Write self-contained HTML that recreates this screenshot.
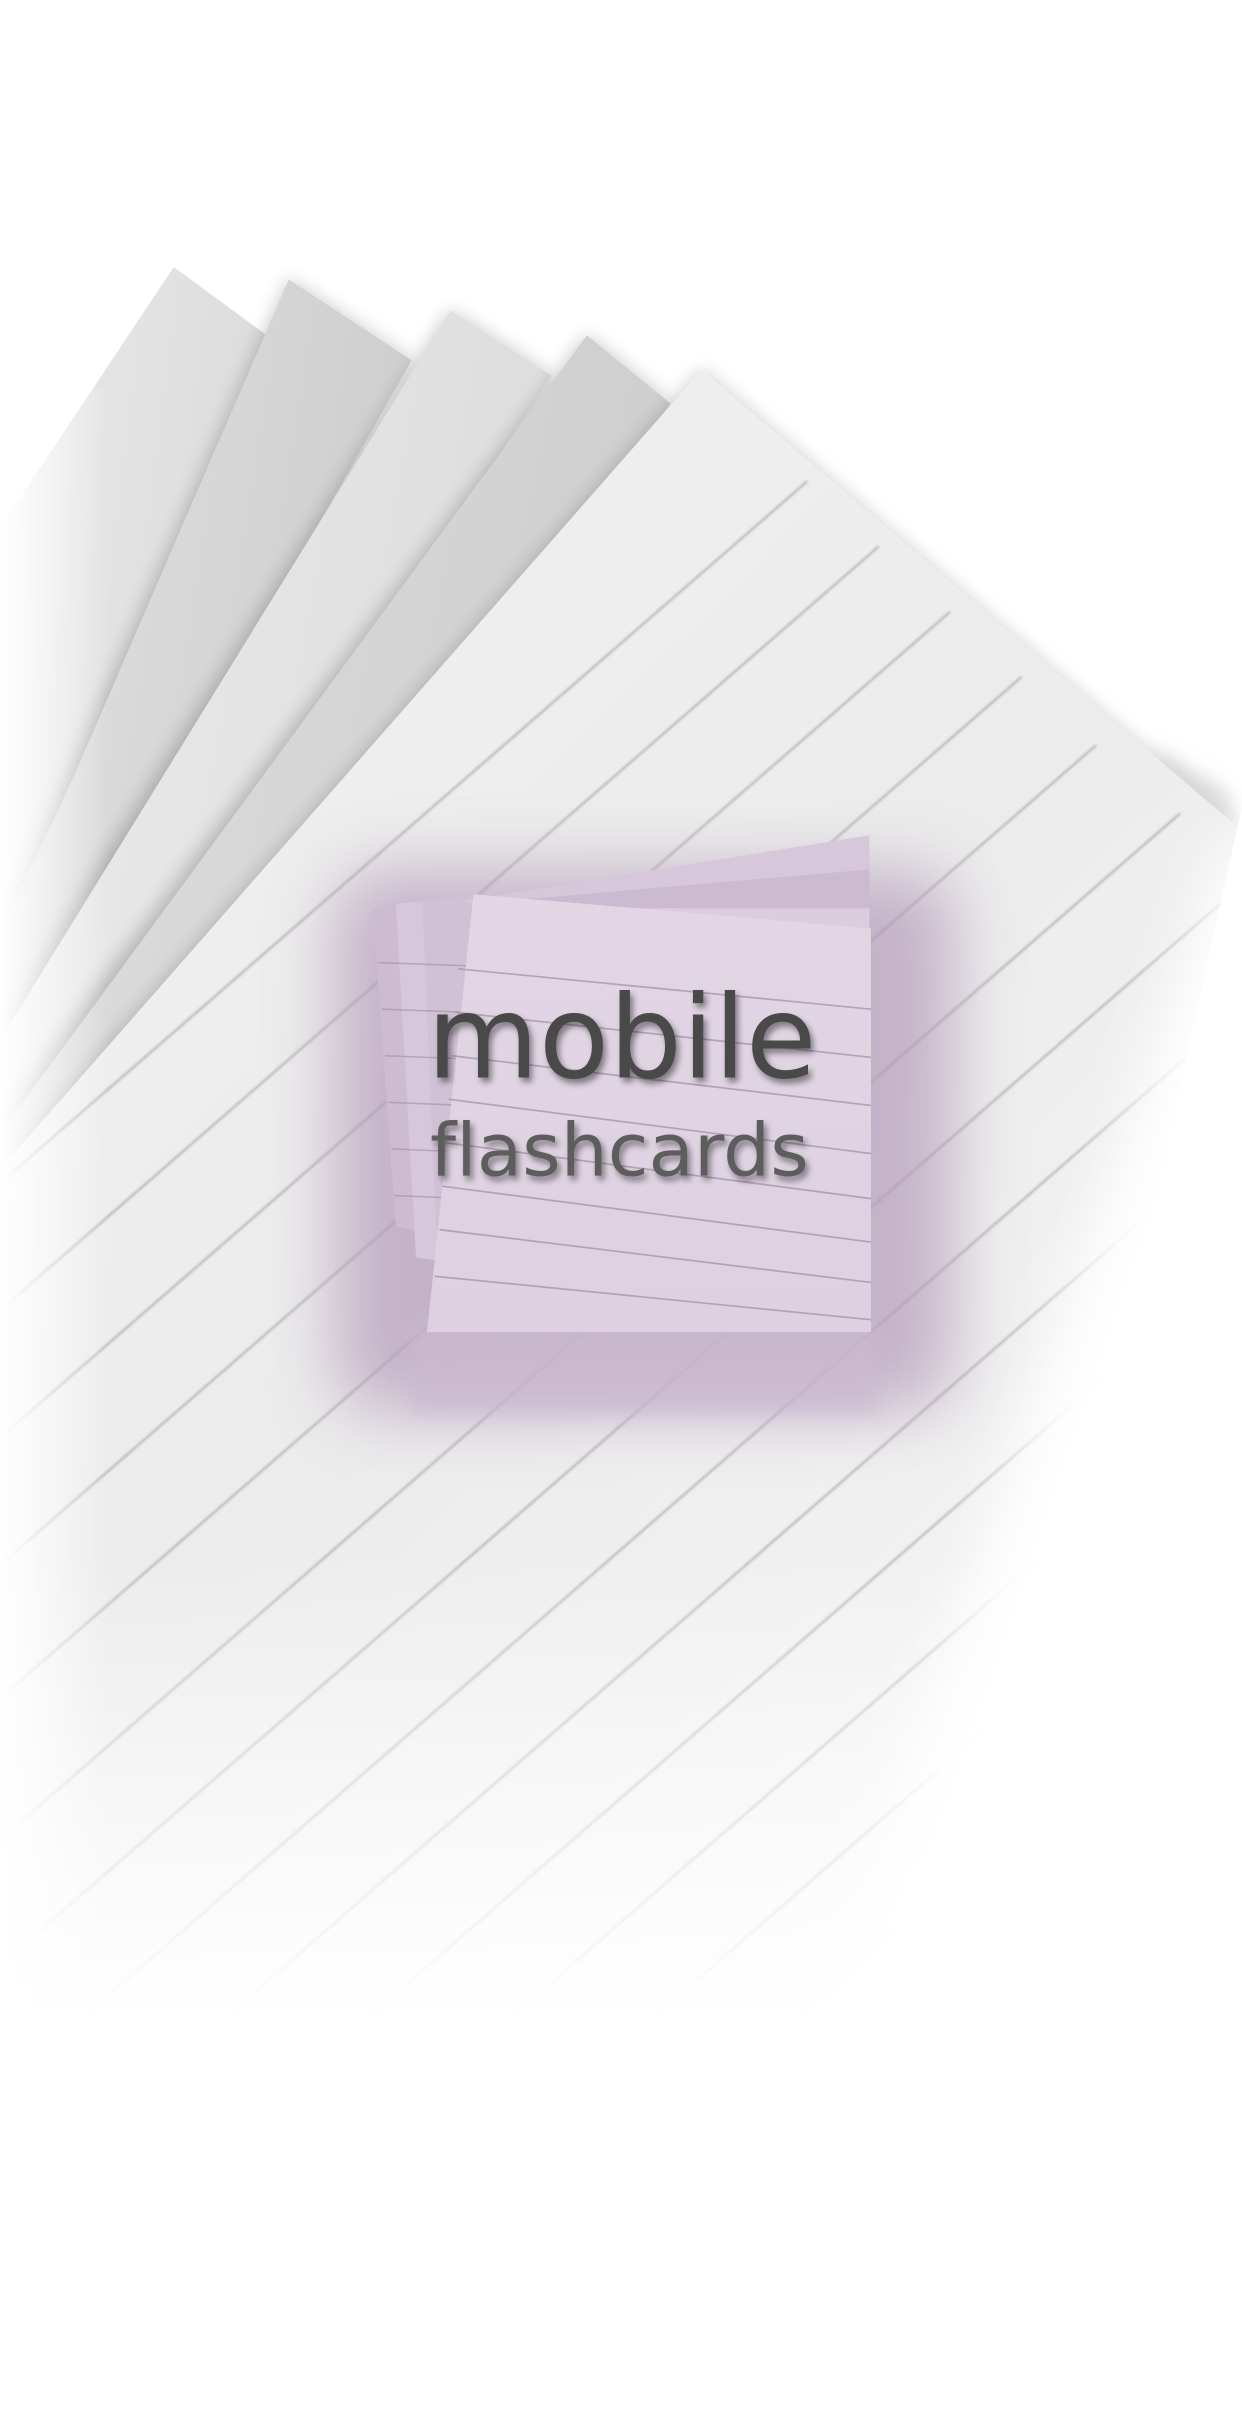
<!DOCTYPE html>
<html><head><meta charset="utf-8"><style>
html,body{margin:0;padding:0;background:#fff;width:1242px;height:2436px;overflow:hidden;}
svg{display:block}
</style></head><body>
<svg width="1242" height="2436" viewBox="0 0 800 1569" preserveAspectRatio="none" xmlns="http://www.w3.org/2000/svg">
<defs>
<filter id="sh" x="-20%" y="-20%" width="140%" height="140%"><feGaussianBlur stdDeviation="6"/></filter>
<filter id="b1"><feGaussianBlur stdDeviation="0.6"/></filter>
<filter id="edge" x="-20%" y="-20%" width="140%" height="140%"><feGaussianBlur stdDeviation="18"/></filter>
<filter id="glow" x="-30%" y="-30%" width="160%" height="160%"><feGaussianBlur stdDeviation="22"/></filter>
<filter id="tsh" x="-10%" y="-20%" width="130%" height="160%"><feGaussianBlur in="SourceAlpha" stdDeviation="2"/><feOffset dx="2" dy="3"/><feComponentTransfer><feFuncA type="linear" slope="0.45"/></feComponentTransfer><feMerge><feMergeNode/><feMergeNode in="SourceGraphic"/></feMerge></filter>
<linearGradient id="g1" x1="0" y1="0" x2="1" y2="0.3"><stop offset="0" stop-color="#ebebeb"/><stop offset="1" stop-color="#dadada"/></linearGradient>
<linearGradient id="g2" x1="0" y1="0" x2="1" y2="0.3"><stop offset="0" stop-color="#e2e2e2"/><stop offset="1" stop-color="#cdcdcd"/></linearGradient>
<linearGradient id="g3" x1="0" y1="0" x2="1" y2="0.3"><stop offset="0" stop-color="#ededed"/><stop offset="1" stop-color="#dcdcdc"/></linearGradient>
<linearGradient id="g4" x1="0" y1="0" x2="1" y2="0.3"><stop offset="0" stop-color="#e0e0e0"/><stop offset="1" stop-color="#cdcdcd"/></linearGradient>
<linearGradient id="g5" x1="0" y1="0" x2="0.6" y2="1"><stop offset="0" stop-color="#f0f0f0"/><stop offset="0.5" stop-color="#ececec"/><stop offset="1" stop-color="#f6f6f6"/></linearGradient>
<linearGradient id="fadeB" x1="0" y1="0" x2="0" y2="1"><stop offset="0" stop-color="#fff" stop-opacity="0"/><stop offset="1" stop-color="#fff" stop-opacity="1"/></linearGradient>
<linearGradient id="fadeL" x1="0" y1="0" x2="1" y2="0"><stop offset="0" stop-color="#fff" stop-opacity="1"/><stop offset="1" stop-color="#fff" stop-opacity="0"/></linearGradient>
<clipPath id="mainclip"><polygon points="452,238 800,535 800,1569 0,1569 0,753"/></clipPath>
<linearGradient id="pc" x1="0" y1="0" x2="0" y2="1"><stop offset="0" stop-color="#e2d6e5"/><stop offset="1" stop-color="#ddd0e0"/></linearGradient>
</defs>

<polygon points="112,172 180,222 0,600 0,340" fill="url(#g1)"/>
<polygon points="186,180 265,232 0,700 0,600" fill="#000" opacity="0.22" filter="url(#sh)"/>
<polygon points="186,180 265,232 0,700 0,610" fill="url(#g2)"/>
<polygon points="290,200 355,242 0,760 0,660" fill="#000" opacity="0.22" filter="url(#sh)"/>
<polygon points="290,200 355,242 0,780 0,670" fill="url(#g3)"/>
<polygon points="378,216 430,258 0,820 0,720" fill="#000" opacity="0.22" filter="url(#sh)"/>
<polygon points="378,216 432,260 0,830 0,730" fill="url(#g4)"/>
<polygon points="452,238 775,515 0,880 0,753" fill="#000" opacity="0.2" filter="url(#sh)"/>
<polygon points="740,480 790,510 800,540 760,540" fill="#d8d8d8" filter="url(#sh)"/>

<g clip-path="url(#mainclip)">
<polygon points="452,238 800,535 800,1569 0,1569 0,753" fill="url(#g5)"/>
<g stroke="#a9a9a9" stroke-width="1.3" filter="url(#b1)" opacity="0.85">
<line x1="520" y1="310" x2="-200" y2="936"/>
<line x1="566" y1="352" x2="-200" y2="1018"/>
<line x1="612" y1="394" x2="-200" y2="1100"/>
<line x1="658" y1="436" x2="-200" y2="1182"/>
<line x1="706" y1="480" x2="-200" y2="1268"/>
<line x1="760" y1="524" x2="-200" y2="1359"/>
<line x1="800" y1="570" x2="-200" y2="1440"/>
<line x1="800" y1="650" x2="-200" y2="1520"/>
<line x1="800" y1="730" x2="-200" y2="1600"/>
<line x1="800" y1="810" x2="-200" y2="1680"/>
<line x1="800" y1="890" x2="-200" y2="1760"/>
<line x1="800" y1="970" x2="-200" y2="1840"/>
<line x1="800" y1="1050" x2="-200" y2="1920"/>
<line x1="800" y1="1130" x2="-200" y2="2000"/>
</g>
</g>
<polygon points="790,540 900,540 900,1600 500,1600 530,1300" fill="#fff" filter="url(#edge)"/>
<polygon points="800,520 900,520 900,1600 560,1600" fill="#fff"/>
<rect x="0" y="1000" width="800" height="300" fill="url(#fadeB)"/>
<rect x="0" y="1298" width="800" height="271" fill="#fff"/>
<rect x="0" y="250" width="70" height="1048" fill="url(#fadeL)"/>

<rect x="215" y="560" width="400" height="350" rx="30" fill="#b39ab8" opacity="0.7" filter="url(#glow)"/>
<rect x="265" y="850" width="300" height="60" fill="#cbb9d0" opacity="0.7" filter="url(#sh)"/>

<polygon points="240,585 300,580 300,800 255,790" fill="#cdbbd2"/>
<polygon points="255,582 305,578 305,815 268,810" fill="#d6c8da"/>
<polygon points="272,580 310,576 300,820 282,820" fill="#d1c1d5"/>
<g stroke="#a28fa6" stroke-width="1" opacity="0.6">
<line x1="244" y1="620" x2="300" y2="622"/><line x1="246" y1="650" x2="300" y2="652"/><line x1="248" y1="680" x2="300" y2="682"/>
<line x1="250" y1="710" x2="300" y2="712"/><line x1="252" y1="740" x2="300" y2="742"/><line x1="254" y1="770" x2="300" y2="772"/>
</g>
<polygon points="300,580 560,538 560,560 310,585" fill="#d6c7da"/>
<polygon points="305,582 560,560 560,585 315,588" fill="#ccbad1"/>
<polygon points="310,585 560,585 560,600 320,590" fill="#dacddd"/>
<polygon points="315,588 560,600 560,612 320,592" fill="#c8b5cc"/>

<polygon points="305,576 561,598 561,858 275,858" fill="url(#pc)"/>
<g stroke="#9f8fa3" stroke-width="1.1" opacity="0.7">
<line x1="295" y1="624" x2="561" y2="650"/>
<line x1="293" y1="652" x2="561" y2="681"/>
<line x1="291" y1="680" x2="561" y2="712"/>
<line x1="289" y1="708" x2="561" y2="743"/>
<line x1="287" y1="736" x2="561" y2="772"/>
<line x1="285" y1="764" x2="561" y2="800"/>
<line x1="283" y1="792" x2="561" y2="826"/>
<line x1="280" y1="822" x2="561" y2="850"/>
</g>

<text x="275" y="694" font-family="DejaVu Sans, Liberation Sans, sans-serif" font-size="74" fill="#4a4a4a" textLength="251" lengthAdjust="spacingAndGlyphs" filter="url(#tsh)">mobile</text>
<text x="277" y="757" font-family="DejaVu Sans, Liberation Sans, sans-serif" font-size="47" fill="#5d5d5d" textLength="244" lengthAdjust="spacingAndGlyphs" style="font-variant-ligatures:none;font-feature-settings:'liga' 0" filter="url(#tsh)">flashcards</text>
</svg>
</body></html>
